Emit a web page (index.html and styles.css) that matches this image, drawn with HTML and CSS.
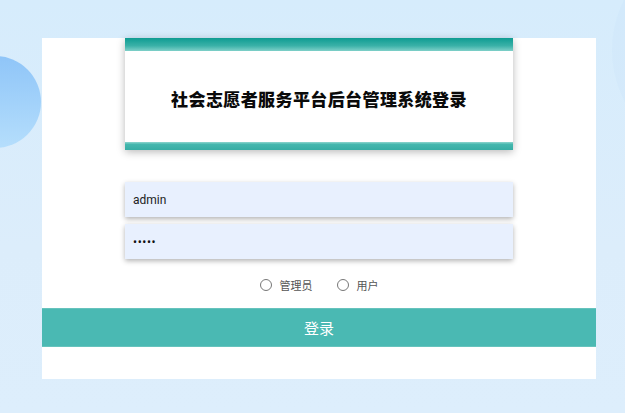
FILE: index.html
```html
<!DOCTYPE html>
<html lang="zh">
<head>
<meta charset="utf-8">
<title>登录</title>
<link rel="stylesheet" href="styles.css">
</head>
<body>
<div class="stage">
  <div class="bubble bubble-left"></div>
  <div class="bubble bubble-right"></div>
  <main class="panel">
    <section class="header-card">
      <div class="band band-top"></div>
      <h1 class="title">社会志愿者服务平台后台管理系统登录</h1>
      <div class="band band-bottom"></div>
    </section>
    <form class="form">
      <div class="fields">
        <input class="field" type="text" value="admin">
        <input class="field field-pass" type="password" value="12345">
      </div>
      <div class="roles">
        <label class="role"><span class="radio"></span><span class="role-text">管理员</span></label>
        <label class="role"><span class="radio"></span><span class="role-text">用户</span></label>
      </div>
      <button class="submit" type="button">登录</button>
    </form>
  </main>
</div>
</body>
</html>
```

FILE: styles.css
```css
html, body {
  margin: 0;
  padding: 0;
  overflow: hidden;
}
.stage {
  width: 625px;
  height: 413px;
  overflow: hidden;
  position: relative;
  background: linear-gradient(180deg, #d6ecfc 0%, #dcedfb 60%, #ddeefc 100%);
  font-family: "Noto Sans CJK SC", "Noto Sans", sans-serif;
  padding-top: 38px;
  box-sizing: border-box;
}
.bubble {
  position: absolute;
  border-radius: 50%;
}
.bubble-left {
  left: -51px;
  top: 56px;
  width: 92px;
  height: 92px;
  background: linear-gradient(180deg, #8fc5f8 0%, #b5defc 100%);
  filter: blur(0.6px);
}
.bubble-right {
  left: 612px;
  top: -60px;
  width: 220px;
  height: 220px;
  background: rgba(160, 205, 245, 0.08);
}
.panel {
  position: relative;
  margin-left: 42px;
  width: 554px;
  height: 341px;
  background: #fff;
  display: flex;
  flex-direction: column;
  align-items: center;
}
.header-card {
  width: 388px;
  height: 112px;
  display: flex;
  flex-direction: column;
  background: #fff;
  box-shadow: 0 2px 8px rgba(0, 0, 0, 0.28);
}
.band-top {
  height: 13px;
  background: linear-gradient(180deg, #0e9c92 0%, #3bb1a8 60%, #7fd0c9 100%);
}
.band-bottom {
  height: 8px;
  background: linear-gradient(180deg, #8fd6cf 0%, #45b7ae 30%, #37ada4 100%);
}
.title {
  flex: 1;
  margin: 0;
  display: flex;
  align-items: center;
  justify-content: center;
  font-size: 17px;
  letter-spacing: 0.4px;
  font-weight: 900;
  color: #0a0a0a;
  padding-top: 3px;
}
.form {
  width: 100%;
  display: flex;
  flex-direction: column;
  align-items: center;
  margin: 32px 0 0;
}
.fields {
  display: flex;
  flex-direction: column;
  gap: 7px;
}
.field {
  width: 388px;
  height: 35px;
  box-sizing: border-box;
  border: none;
  outline: none;
  background: #e8f0fe;
  padding: 0 8px;
  font-family: Roboto, "Noto Sans", sans-serif;
  font-size: 12px;
  color: #222;
  box-shadow: 0 2px 5px rgba(0, 0, 0, 0.3);
}
.field-pass {
  font-size: 12px;
  letter-spacing: 0.6px;
  color: #111;
}
.roles {
  display: flex;
  gap: 24px;
  margin-top: 19px;
  height: 14px;
  align-items: center;
}
.role {
  display: flex;
  align-items: center;
  gap: 8px;
  font-size: 11px;
  color: #555;
}
.radio {
  width: 10px;
  height: 10px;
  border: 1px solid #777;
  border-radius: 50%;
  background: #fff;
}
.submit {
  margin-top: 16px;
  width: 554px;
  height: 39px;
  border: none;
  border-top: 1px solid #66c3bd;
  border-bottom: 1px solid #66c3bd;
  background: #4ab9b3;
  color: #fff;
  font-family: "Noto Sans CJK SC", sans-serif;
  font-size: 15px;
  padding: 0;
}
```
